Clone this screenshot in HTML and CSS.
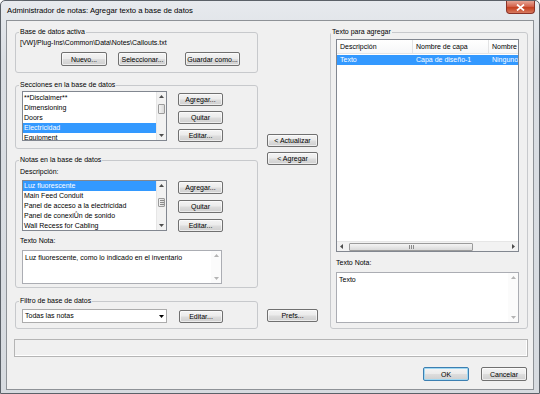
FILE: index.html
```html
<!DOCTYPE html>
<html lang="es">
<head>
    <meta charset="UTF-8">
    <title>Administrador de notas</title>
    <link rel="stylesheet" href="styles.css">
</head>
<body>
    <div class="window">
        <!-- Title bar -->
        <div class="titlebar">
            <span class="title">Administrador de notas: Agregar texto a base de datos</span>
            <div class="close-btn">
                <svg width="9" height="7" viewBox="0 0 9 7"><path d="M1 0.5 L8 6.5 M8 0.5 L1 6.5" stroke="#ffffff" stroke-width="1.7"/></svg>
            </div>
        </div>

        <div class="frame">
            <div class="client">
                <div class="main-row">
                    <!-- Left column -->
                    <div class="left-col">
                        <fieldset class="group group-active">
                            <legend>Base de datos activa</legend>
                            <div class="path">[VW]/Plug-Ins\Common\Data\Notes\Callouts.txt</div>
                            <div class="active-buttons">
                                <button class="btn btn-nuevo">Nuevo...</button>
                                <button class="btn btn-select">Seleccionar...</button>
                                <button class="btn btn-save">Guardar como...</button>
                            </div>
                        </fieldset>

                        <fieldset class="group group-sections">
                            <legend>Secciones en la base de datos</legend>
                            <div class="list-row">
                                <div class="listbox">
                                    <div class="list-items">
                                        <div class="list-item">**Disclaimer**</div>
                                        <div class="list-item">Dimensioning</div>
                                        <div class="list-item">Doors</div>
                                        <div class="list-item selected">Electricidad</div>
                                        <div class="list-item">Equipment</div>
                                    </div>
                                    <div class="vscroll">
                                        <div class="sb-arrow"><svg width="5" height="3" viewBox="0 0 5 3"><path d="M0 3 L2.5 0 L5 3 Z" fill="#4d4d4d"/></svg></div>
                                        <div class="sb-track"><div class="sb-thumb thumb-sections"></div></div>
                                        <div class="sb-arrow"><svg width="5" height="3" viewBox="0 0 5 3"><path d="M0 0 L2.5 3 L5 0 Z" fill="#4d4d4d"/></svg></div>
                                    </div>
                                </div>
                                <div class="side-buttons">
                                    <button class="btn btn-side">Agregar...</button>
                                    <button class="btn btn-side">Quitar</button>
                                    <button class="btn btn-side">Editar...</button>
                                </div>
                            </div>
                        </fieldset>

                        <fieldset class="group group-notes">
                            <legend>Notas en la base de datos</legend>
                            <div class="field-label label-desc">Descripción:</div>
                            <div class="list-row notes-row">
                                <div class="listbox listbox-notes">
                                    <div class="list-items">
                                        <div class="list-item selected">Luz fluorescente</div>
                                        <div class="list-item">Main Feed Conduit</div>
                                        <div class="list-item">Panel de acceso a la electricidad</div>
                                        <div class="list-item">Panel de conexiÛn de sonido</div>
                                        <div class="list-item">Wall Recess for Cabling</div>
                                    </div>
                                    <div class="vscroll">
                                        <div class="sb-arrow"><svg width="5" height="3" viewBox="0 0 5 3"><path d="M0 3 L2.5 0 L5 3 Z" fill="#4d4d4d"/></svg></div>
                                        <div class="sb-track">
                                            <div class="sb-thumb thumb-notes">
                                                <svg width="4" height="5" viewBox="0 0 4 5"><path d="M0 0.5 H4 M0 2.5 H4 M0 4.5 H4" stroke="#8a8a8a" stroke-width="1"/></svg>
                                            </div>
                                        </div>
                                        <div class="sb-arrow"><svg width="5" height="3" viewBox="0 0 5 3"><path d="M0 0 L2.5 3 L5 0 Z" fill="#4d4d4d"/></svg></div>
                                    </div>
                                </div>
                                <div class="side-buttons side-buttons-notes">
                                    <button class="btn btn-side">Agregar...</button>
                                    <button class="btn btn-side">Quitar</button>
                                    <button class="btn btn-side">Editar...</button>
                                </div>
                            </div>
                            <div class="field-label label-note">Texto Nota:</div>
                            <div class="memo memo-left">
                                <div class="memo-text">Luz fluorescente, como lo indicado en el inventario</div>
                                <div class="vscroll vscroll-off">
                                    <div class="sb-arrow"><svg width="5" height="3" viewBox="0 0 5 3"><path d="M0 3 L2.5 0 L5 3 Z" fill="#b4b4b4"/></svg></div>
                                    <div class="sb-track"></div>
                                    <div class="sb-arrow"><svg width="5" height="3" viewBox="0 0 5 3"><path d="M0 0 L2.5 3 L5 0 Z" fill="#b4b4b4"/></svg></div>
                                </div>
                            </div>
                        </fieldset>

                        <fieldset class="group group-filter">
                            <legend>Filtro de base de datos</legend>
                            <div class="list-row">
                                <div class="combo">
                                    <span>Todas las notas</span>
                                    <svg width="5" height="3" viewBox="0 0 5 3"><path d="M0 0 L2.5 3 L5 0 Z" fill="#000000"/></svg>
                                </div>
                                <button class="btn btn-filter">Editar...</button>
                            </div>
                        </fieldset>
                    </div>

                    <!-- Middle column -->
                    <div class="mid-col">
                        <button class="btn btn-mid">&lt; Actualizar</button>
                        <button class="btn btn-mid btn-add">&lt; Agregar</button>
                        <button class="btn btn-mid btn-prefs">Prefs...</button>
                    </div>

                    <!-- Right group -->
                    <fieldset class="group group-add">
                        <legend>Texto para agregar</legend>
                        <div class="listview">
                            <div class="lv-header">
                                <div class="lv-col">Descripción</div>
                                <div class="lv-col">Nombre de capa</div>
                                <div class="lv-col lv-last">Nombre</div>
                            </div>
                            <div class="lv-body">
                                <div class="lv-row">
                                    <div class="lv-cell">Texto</div>
                                    <div class="lv-cell">Capa de diseño-1</div>
                                    <div class="lv-cell lv-last">Ninguno</div>
                                </div>
                            </div>
                            <div class="hscroll">
                                <div class="sb-arrow-h"><svg width="3" height="5" viewBox="0 0 3 5"><path d="M3 0 L0 2.5 L3 5 Z" fill="#4d4d4d"/></svg></div>
                                <div class="sb-track-h">
                                    <div class="sb-thumb-h">
                                        <svg width="5" height="4" viewBox="0 0 5 4"><path d="M0.5 0 V4 M2.5 0 V4 M4.5 0 V4" stroke="#8a8a8a" stroke-width="1"/></svg>
                                    </div>
                                </div>
                                <div class="sb-arrow-h"><svg width="3" height="5" viewBox="0 0 3 5"><path d="M0 0 L3 2.5 L0 5 Z" fill="#4d4d4d"/></svg></div>
                            </div>
                        </div>
                        <div class="field-label label-add-note">Texto Nota:</div>
                        <div class="memo memo-right">
                            <div class="memo-text">Texto</div>
                            <div class="vscroll vscroll-off">
                                <div class="sb-arrow"><svg width="5" height="3" viewBox="0 0 5 3"><path d="M0 3 L2.5 0 L5 3 Z" fill="#b4b4b4"/></svg></div>
                                <div class="sb-track"></div>
                                <div class="sb-arrow"><svg width="5" height="3" viewBox="0 0 5 3"><path d="M0 0 L2.5 3 L5 0 Z" fill="#b4b4b4"/></svg></div>
                            </div>
                        </div>
                    </fieldset>
                </div>

                <div class="status-box"></div>

                <div class="footer">
                    <button class="btn btn-footer btn-default">OK</button>
                    <button class="btn btn-footer">Cancelar</button>
                </div>
            </div>
        </div>
    </div>
</body>
</html>
```

FILE: styles.css
```css
* {
    margin: 0;
    padding: 0;
    box-sizing: border-box;
}

body {
    font-family: "Liberation Sans", Arial, sans-serif;
    font-size: 7px;
    line-height: 10px;
    color: #000000;
    background-color: #ffffff;
    overflow: hidden;
}

/* Window frame */

.window {
    width: 540px;
    height: 394px;
    border: 1px solid #5b6168;
    border-radius: 5px 5px 0 0;
    background: linear-gradient(#e7eaee, #dadee3 60px, #d7dbe0);
    display: flex;
    flex-direction: column;
}

.titlebar {
    height: 19px;
    display: flex;
    justify-content: space-between;
    align-items: flex-start;
    padding: 0 4px 0 6px;
}

.title {
    font-size: 7.7px;
    line-height: 20px;
}

.close-btn {
    width: 29px;
    height: 13px;
    border: 1px solid #8a3328;
    border-top: none;
    border-radius: 0 0 4px 4px;
    background: linear-gradient(#e6a595, #d4644d 45%, #c4401f 55%, #d77a60);
    display: flex;
    align-items: center;
    justify-content: center;
}

.frame {
    flex: 1;
    display: flex;
    padding: 0 5px 3px;
}

.client {
    flex: 1;
    display: flex;
    flex-direction: column;
    border: 1px solid #8e9297;
    background-color: #f0f0f0;
}

.main-row {
    display: flex;
    align-items: flex-start;
    padding: 6px 5px 0 8px;
}

/* Group boxes */

.group {
    border: 1px solid #c7c9cc;
    border-radius: 3px;
    padding: 0 0 0 3px;
    min-width: 0;
}

.group legend {
    padding: 0 1px;
    line-height: 10px;
}

.left-col {
    width: 243px;
    display: flex;
    flex-direction: column;
}

.group-active {
    padding-bottom: 6px;
}

.path {
    margin: 1px 0 0 1px;
    white-space: nowrap;
}

.active-buttons {
    display: flex;
    margin: 4px 0 0 42px;
}

.group-sections {
    margin-top: 7px;
    padding-bottom: 6px;
}

.group-notes {
    margin-top: 6px;
    padding-bottom: 3px;
}

.group-filter {
    margin-top: 8px;
    padding-bottom: 5px;
}

.group-add {
    width: 198px;
    margin-left: 12px;
    padding-left: 0;
    padding-bottom: 5px;
}

.field-label {
    margin-left: 1px;
    height: 10px;
}

.label-desc {
    margin-top: 2px;
}

.label-note {
    margin-top: 4px;
}

.label-add-note {
    margin: 6px 0 0 5px;
}

/* Buttons */

.btn {
    font-family: "Liberation Sans", Arial, sans-serif;
    font-size: 7px;
    color: #000000;
    height: 13px;
    line-height: 11px;
    border: 1px solid #707070;
    border-radius: 2px;
    background: linear-gradient(#f4f4f4, #ebebeb 48%, #dddddd 52%, #cfcfcf);
    box-shadow: inset 0 0 0 1px rgba(255, 255, 255, 0.6);
    text-align: center;
    white-space: nowrap;
}

.btn-nuevo {
    width: 46px;
    height: 14px;
}

.btn-select {
    width: 49px;
    height: 14px;
    margin-left: 11px;
}

.btn-save {
    width: 55px;
    height: 14px;
    margin-left: 18px;
}

.side-buttons {
    display: flex;
    flex-direction: column;
    gap: 5px;
    margin-left: 11px;
    padding-top: 3px;
}

.side-buttons-notes {
    gap: 6px;
    padding-top: 1px;
}

.btn-side {
    width: 45px;
}

.btn-filter {
    width: 44px;
    margin: 4px 0 0 12px;
}

.mid-col {
    width: 51px;
    margin-left: 9px;
    padding-top: 107px;
    display: flex;
    flex-direction: column;
}

.btn-mid {
    width: 51px;
}

.btn-add {
    margin-top: 5px;
}

.btn-prefs {
    margin-top: 144px;
}

.btn-footer {
    width: 46px;
    height: 14px;
}

.btn-default {
    border-color: #3c7fb1;
    box-shadow: inset 0 0 0 1px #9fd8f3;
}

/* List boxes */

.list-row {
    display: flex;
    align-items: flex-start;
}

.listbox {
    width: 145px;
    height: 50px;
    margin: 1px 0 0 3px;
    border: 1px solid #828790;
    background-color: #ffffff;
    display: flex;
}

.notes-row {
    margin-top: 3px;
}

.listbox-notes {
    height: 51px;
    margin-top: 0;
}

.list-items {
    flex: 1;
    padding-top: 1px;
    overflow: hidden;
}

.listbox-notes .list-items {
    padding-top: 0;
}

.list-item {
    height: 10px;
    padding-left: 1px;
    white-space: nowrap;
}

.list-item.selected {
    background-color: #3399ff;
    color: #ffffff;
}

/* Scroll bars */

.vscroll {
    width: 10px;
    display: flex;
    flex-direction: column;
    background-color: #f2f2f2;
    border-left: 1px solid #e6e6e6;
}

.vscroll-off {
    background-color: #fbfbfb;
    border-left: none;
}

.sb-arrow {
    height: 9px;
    display: flex;
    align-items: center;
    justify-content: center;
}

.sb-track {
    flex: 1;
}

.sb-thumb {
    margin: 3px 1px 0;
    height: 10px;
    border: 1px solid #9b9b9b;
    border-radius: 1px;
    background: linear-gradient(to right, #f4f4f4, #dadada);
    display: flex;
    align-items: center;
    justify-content: center;
}

.thumb-notes {
    margin-top: 8px;
    height: 9px;
}

.hscroll {
    height: 10px;
    display: flex;
    background-color: #f2f2f2;
    border-top: 1px solid #e6e6e6;
}

.sb-arrow-h {
    width: 9px;
    display: flex;
    align-items: center;
    justify-content: center;
}

.sb-track-h {
    flex: 1;
}

.sb-thumb-h {
    margin: 1px 0 0 3px;
    width: 124px;
    height: 8px;
    border: 1px solid #9b9b9b;
    border-radius: 1px;
    background: linear-gradient(#f4f4f4, #dadada);
    display: flex;
    align-items: center;
    justify-content: center;
}

/* Text areas */

.memo {
    margin: 4px 0 0 3px;
    border: 1px solid #abadb3;
    background-color: #ffffff;
    display: flex;
}

.memo-left {
    width: 200px;
    height: 34px;
}

.memo-right {
    width: 183px;
    height: 51px;
    margin-left: 5px;
}

.memo-text {
    flex: 1;
    padding: 2px 2px 0;
    white-space: nowrap;
    overflow: hidden;
}

/* Combo box */

.combo {
    width: 145px;
    height: 14px;
    margin: 3px 0 0 3px;
    border: 1px solid #acacac;
    background-color: #ffffff;
    display: flex;
    align-items: center;
    justify-content: space-between;
    padding: 0 2px 0 2px;
}

/* List view */

.listview {
    width: 183px;
    height: 213px;
    margin: 2px 0 0 5px;
    border: 1px solid #828790;
    background-color: #ffffff;
    display: flex;
    flex-direction: column;
}

.lv-header {
    height: 14px;
    display: flex;
    border-bottom: 1px solid #e5e5e5;
    background: linear-gradient(#ffffff, #f6f7f8);
}

.lv-col {
    width: 76px;
    flex-shrink: 0;
    padding-left: 3px;
    line-height: 13px;
    border-right: 1px solid #e2e3e4;
    white-space: nowrap;
    overflow: hidden;
}

.lv-body {
    flex: 1;
    padding-top: 1px;
}

.lv-row {
    display: flex;
    height: 10px;
    background-color: #3399ff;
    color: #ffffff;
}

.lv-cell {
    width: 76px;
    flex-shrink: 0;
    padding-left: 3px;
    white-space: nowrap;
    overflow: hidden;
}

.lv-last {
    flex: 1;
    width: auto;
    flex-shrink: 1;
    min-width: 0;
    border-right: none;
}

/* Bottom */

.status-box {
    height: 18px;
    margin: 10px 5px 0 7px;
    border: 1px solid #b5b5b5;
    box-shadow: inset -1px -1px 0 #ffffff;
}

.footer {
    display: flex;
    justify-content: flex-end;
    gap: 12px;
    margin-top: 10px;
    padding-right: 6px;
}
```
